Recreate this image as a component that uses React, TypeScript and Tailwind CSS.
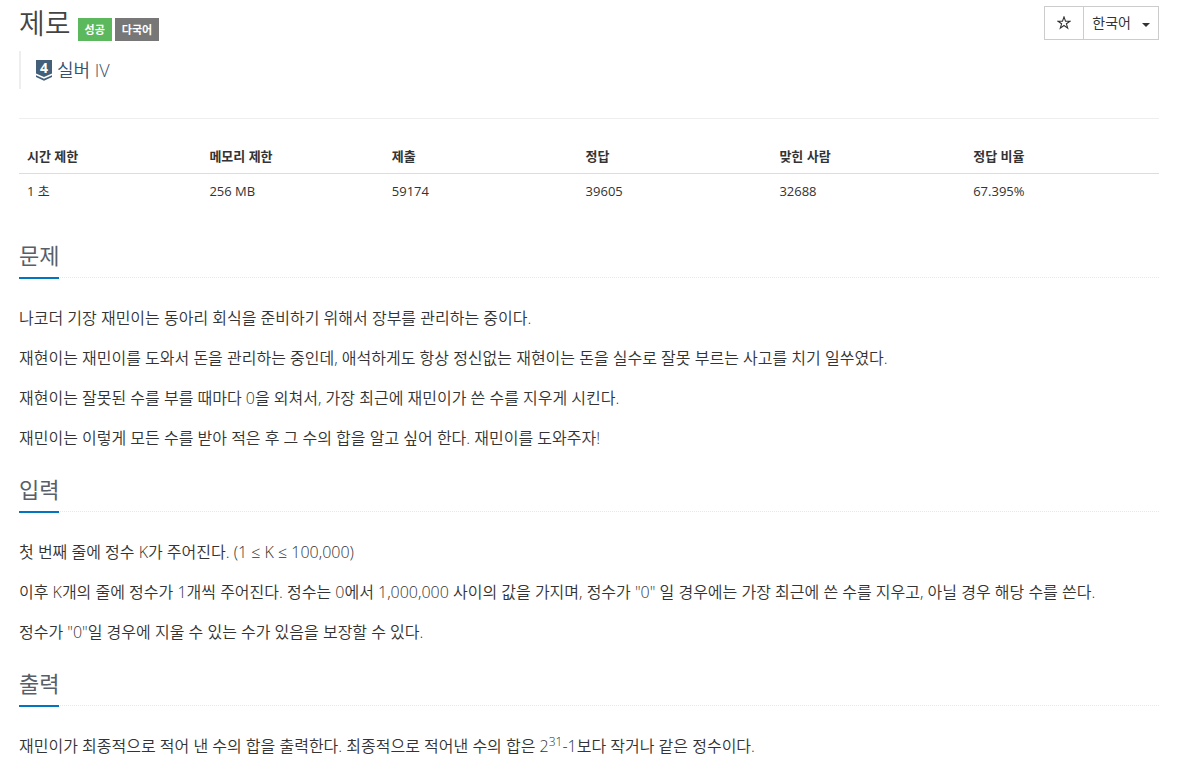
import type { ReactNode } from 'react'

const limits = [
  { label: '시간 제한', value: '1 초', width: 'w-[16%]' },
  { label: '메모리 제한', value: '256 MB', width: 'w-[16%]' },
  { label: '제출', value: '59174', width: 'w-[17%]' },
  { label: '정답', value: '39605', width: 'w-[17%]' },
  { label: '맞힌 사람', value: '32688', width: 'w-[17%]' },
  { label: '정답 비율', value: '67.395%', width: 'w-[17%]' },
]

function TierBadge() {
  return (
    <svg viewBox="0 0 16 21" className="mt-px h-[21px] w-4 overflow-visible" aria-hidden="true">
      <path d="M0 0h16v13.5l-8 3.5-8-3.5z" fill="#435f7a" />
      <path d="M0 15.2l8 3.5 8-3.5v1.9l-8 3.6-8-3.6z" fill="#435f7a" />
      <text x="8" y="13" textAnchor="middle" fontSize="14" fontWeight="700" fill="#fff">
        4
      </text>
    </svg>
  )
}

function StarIcon() {
  return (
    <svg viewBox="0 0 14 14" className="size-[14px]" fill="none" stroke="#333" strokeWidth="1.1" aria-hidden="true">
      <path d="M7 .9l1.5 4.3H13L9.4 7.8l1.3 4.3L7 9.5l-3.7 2.6 1.3-4.3L1 5.2h4.5z" />
    </svg>
  )
}

function Section({ title, children }: { title: string; children: ReactNode }) {
  return (
    <section>
      <div className="mb-7 flex border-b border-dotted border-[#e4e9f0]">
        <h2 className="-mb-[2px] border-b-2 border-[#0076c0] pt-[3px] pb-[2px] text-[22px] leading-10 text-[#585f69]">{title}</h2>
      </div>
      <div className="mb-4 flex flex-col gap-4 text-base leading-6 font-[350] text-[#333]">{children}</div>
    </section>
  )
}

export default function App() {
  return (
    <main className="px-[19px] font-['Open_Sans','Noto_Sans_CJK_KR',sans-serif] text-[#333]">
      <header className="flex items-start justify-between pt-[5px]">
        <div className="flex items-end gap-[3px]">
          <h1 className="mr-1 text-[28px] leading-9 font-[350] text-[#444]">제로</h1>
          <span className="bg-[#5cb85c] px-[7px] text-[11px] leading-[23px] font-bold text-white">성공</span>
          <span className="bg-[#777] px-[7px] text-[11px] leading-[23px] font-bold text-white">다국어</span>
        </div>
        <div className="mt-px flex border border-[#ccc] text-sm">
          <button type="button" aria-label="즐겨찾기" className="flex h-8 w-[38px] items-center justify-center">
            <StarIcon />
          </button>
          <button type="button" className="flex h-8 items-center gap-[11px] border-l border-[#ccc] px-2">
            한국어
            <svg viewBox="0 0 8 4" className="mt-1 h-1 w-2" aria-hidden="true">
              <path d="M0 0h8L4 4z" fill="#333" />
            </svg>
          </button>
        </div>
      </header>

      <blockquote className="mt-[10px] flex h-[38px] items-center gap-[5px] border-l-2 border-[#eee] pl-[15px] text-lg leading-6 font-[350] text-[#34516e]">
        <TierBadge />
        실버 IV
      </blockquote>

      <hr className="mt-[29px] mb-5 border-[#eee]" />

      <table className="w-full table-fixed text-left text-[13px] leading-[18px]">
        <thead>
          <tr className="border-b border-[#ddd]">
            {limits.map((item) => (
              <th key={item.label} scope="col" className={`${item.width} px-2 py-2 font-bold`}>
                {item.label}
              </th>
            ))}
          </tr>
        </thead>
        <tbody>
          <tr>
            {limits.map((item) => (
              <td key={item.label} className="px-2 py-2">
                {item.value}
              </td>
            ))}
          </tr>
        </tbody>
      </table>

      <div className="mt-6">
        <Section title="문제">
          <p>나코더 기장 재민이는 동아리 회식을 준비하기 위해서 장부를 관리하는 중이다.</p>
          <p>재현이는 재민이를 도와서 돈을 관리하는 중인데, 애석하게도 항상 정신없는 재현이는 돈을 실수로 잘못 부르는 사고를 치기 일쑤였다.</p>
          <p>재현이는 잘못된 수를 부를 때마다 0을 외쳐서, 가장 최근에 재민이가 쓴 수를 지우게 시킨다.</p>
          <p>재민이는 이렇게 모든 수를 받아 적은 후 그 수의 합을 알고 싶어 한다. 재민이를 도와주자!</p>
        </Section>
        <Section title="입력">
          <p>첫 번째 줄에 정수 K가 주어진다. (1 ≤ K ≤ 100,000)</p>
          <p>이후 K개의 줄에 정수가 1개씩 주어진다. 정수는 0에서 1,000,000 사이의 값을 가지며, 정수가 "0" 일 경우에는 가장 최근에 쓴 수를 지우고, 아닐 경우 해당 수를 쓴다.</p>
          <p>정수가 "0"일 경우에 지울 수 있는 수가 있음을 보장할 수 있다.</p>
        </Section>
        <Section title="출력">
          <p>
            재민이가 최종적으로 적어 낸 수의 합을 출력한다. 최종적으로 적어낸 수의 합은 2<sup>31</sup>-1보다 작거나 같은 정수이다.
          </p>
        </Section>
      </div>
    </main>
  )
}
